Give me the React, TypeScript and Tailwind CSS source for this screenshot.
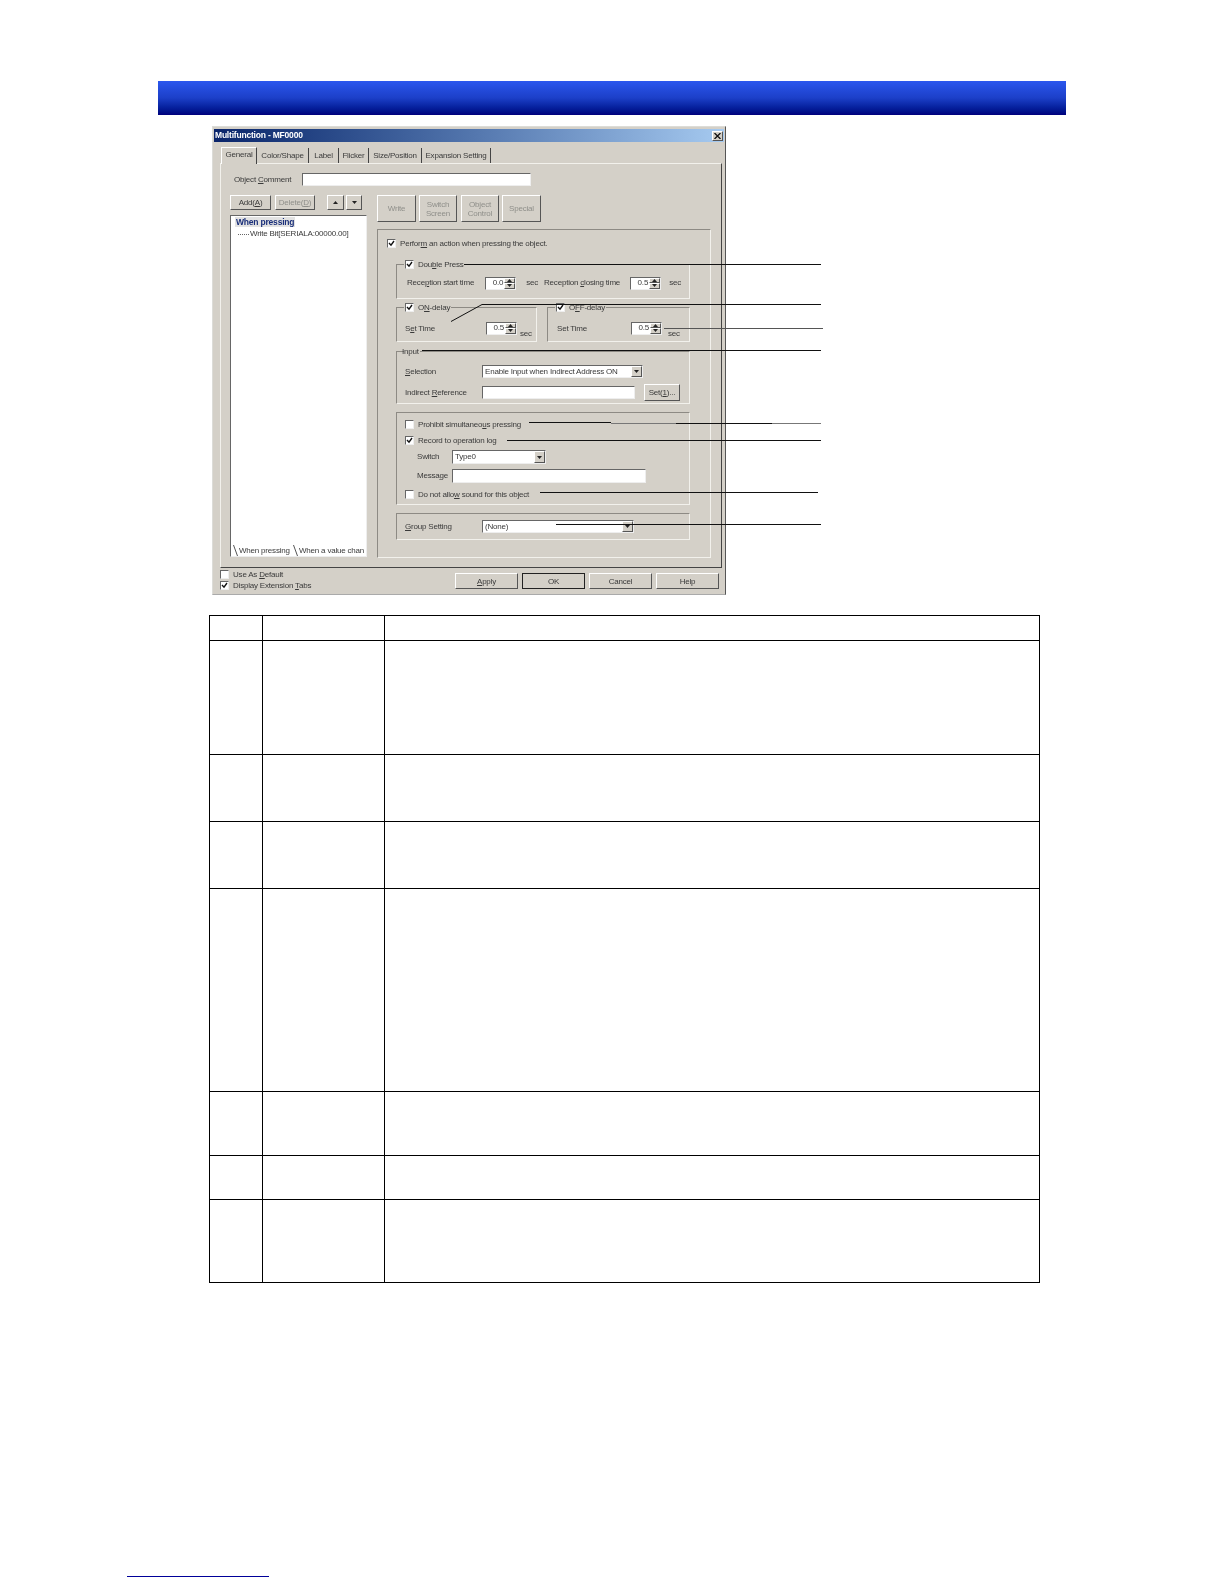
import type { ReactNode } from "react";

const raised = "bg-[#d4d0c8] border border-t-[#fff] border-l-[#fff] border-r-[#555] border-b-[#555]";
const sunken = "bg-white border border-t-[#666] border-l-[#666] border-r-[#eee] border-b-[#eee]";

const Check = ({ on = false }: { on?: boolean }) => (
  <span className={`${sunken} w-[9px] h-[9px] shrink-0 flex items-center justify-center`}>
    {on && (
      <svg width="7" height="7" viewBox="0 0 7 7">
        <path d="M1 3 L3 5.2 L6 1" fill="none" stroke="#111" strokeWidth="1.4" />
      </svg>
    )}
  </span>
);

const CheckRow = ({ on, children, className = "" }: { on?: boolean; children: ReactNode; className?: string }) => (
  <div className={`flex items-center gap-[4px] ${className}`}>
    <Check on={on} />
    <span>{children}</span>
  </div>
);

const Arrow = ({ up }: { up?: boolean }) => (
  <svg width="5" height="3" viewBox="0 0 5 3" className="block">
    <path d={up ? "M2.5 0 L5 3 L0 3 Z" : "M0 0 L5 0 L2.5 3 Z"} fill="#222" />
  </svg>
);

const Spin = ({ value }: { value: string }) => (
  <div className={`${sunken} w-[31px] h-[13px] flex items-center justify-between shrink-0`}>
    <span className="ml-auto mr-[1px]">{value}</span>
    <div className="w-[11px] h-full flex flex-col">
      <span className={`${raised} flex-1 flex items-center justify-center`}><Arrow up /></span>
      <span className={`${raised} flex-1 flex items-center justify-center`}><Arrow /></span>
    </div>
  </div>
);

const Select = ({ value, className }: { value: string; className: string }) => (
  <div className={`${sunken} ${className} h-[13px] flex items-center justify-between pl-[2px] shrink-0`}>
    <span>{value}</span>
    <span className={`${raised} w-[11px] h-full flex items-center justify-center`}><Arrow /></span>
  </div>
);

const Btn = ({ children, className, off }: { children: ReactNode; className: string; off?: boolean }) => (
  <div className={`${raised} ${className} flex items-center justify-center text-center leading-[9px] shrink-0 ${off ? "text-[#8f8f8a]" : ""}`}>
    {children}
  </div>
);

const Group = ({ legend, className, children }: { legend?: ReactNode; className: string; children: ReactNode }) => (
  <div className={`relative border border-t-[#8d8a84] border-l-[#8d8a84] border-r-[#f2f1ec] border-b-[#f2f1ec] ${className}`}>
    {legend && <div className="absolute -top-[6px] left-[7px] bg-[#d4d0c8] px-[1px] h-[11px] flex items-center">{legend}</div>}
    {children}
  </div>
);

const Tab = ({ label, width }: { label: string; width: string }) => (
  <div className={`${width} h-[15px] flex items-center justify-center border-r border-r-[#444] mt-[1px]`}>{label}</div>
);

const Slant = () => (
  <svg width="5" height="11" viewBox="0 0 5 11" className="shrink-0">
    <path d="M0.5 0 L4.5 11" stroke="#555" strokeWidth="1" />
  </svg>
);

const Dialog = () => (
  <div className="w-[514px] h-[469px] ml-[212px] mt-[11px] bg-[#d4d0c8] border border-t-[#dcdcd8] border-l-[#dcdcd8] border-r-[#555] border-b-[#aaa] pt-[2px] px-[1px] text-[8px] tracking-[-0.2px] text-[#3a3a3a] leading-none blur-[0.3px]">
    {/* barra de titulo */}
    <div className="h-[13px] bg-gradient-to-r from-[#0a246a] to-[#a6caf0] flex items-center justify-between pl-[1px] pr-[1px] text-white font-bold text-[8.5px]">
      <span>Multifunction - MF0000</span>
      <span className={`${raised} w-[11px] h-[10px] flex items-center justify-center`}>
        <svg width="7" height="6" viewBox="0 0 7 6">
          <path d="M0.5 0 L6.5 6 M6.5 0 L0.5 6" stroke="#111" strokeWidth="1.3" />
        </svg>
      </span>
    </div>

    {/* pestañas */}
    <div className="flex h-[18px] pl-[7px] items-end mt-[3px]">
      <div className="w-[36px] h-[17px] flex items-center justify-center pb-[3px] bg-[#d4d0c8] border border-b-0 border-t-[#fff] border-l-[#fff] border-r-[#444] -mb-[1px] relative z-10">General</div>
      <Tab label="Color/Shape" width="w-[52px]" />
      <Tab label="Label" width="w-[30px]" />
      <Tab label="Flicker" width="w-[30px]" />
      <Tab label="Size/Position" width="w-[53px]" />
      <Tab label="Expansion Setting" width="w-[69px]" />
    </div>

    <div className="ml-[6px] w-[502px] h-[405px] border border-t-[#f2f1ec] border-l-[#f2f1ec] border-r-[#444] border-b-[#444] pl-[9px] pt-[9px]">
      <div className="flex items-center h-[13px]">
        <span className="w-[72px] pl-[4px]">Object <u>C</u>omment</span>
        <div className={`${sunken} w-[229px] h-[13px]`} />
      </div>

      <div className="flex gap-[10px] mt-[9px]">
        {/* columna izquierda */}
        <div className="w-[137px]">
          <div className="flex h-[15px] items-stretch">
            <Btn className="w-[41px]">Add(<u>A</u>)</Btn>
            <Btn off className="w-[40px] ml-[4px]">Delete(<u>D</u>)</Btn>
            <Btn off className="w-[17px] ml-[12px]"><Arrow up /></Btn>
            <Btn off className="w-[16px] ml-[2px]"><Arrow /></Btn>
          </div>
          <div className={`${sunken} h-[342px] mt-[5px] flex flex-col`}>
            <span className="self-start ml-[4px] mt-[1px] px-[1px] bg-[#e2e2e2] font-bold text-[#1a2f7a] text-[8.5px] h-[10px] flex items-center">When pressing</span>
            <div className="flex items-center ml-[7px] mt-[2px] h-[10px]">
              <span className="w-[11px] border-t border-dotted border-[#666]" />
              <span className="ml-[1px] whitespace-nowrap">Write Bit[SERIALA:00000.00]</span>
            </div>
            <div className="mt-auto flex h-[11px] items-end whitespace-nowrap">
              <div className="ml-[2px] w-[60px] flex items-center gap-[1px]">
                <Slant />
                <span>When pressing</span>
              </div>
              <div className="flex-1 flex items-center gap-[1px] min-w-0">
                <Slant />
                <span>When a value chan</span>
              </div>
            </div>
          </div>
        </div>

        {/* columna derecha */}
        <div className="w-[334px]">
          <div className="flex gap-[3px] h-[27px] items-stretch">
            <Btn off className="w-[39px]">Write</Btn>
            <Btn off className="w-[38px]">Switch<br />Screen</Btn>
            <Btn off className="w-[38px] ml-[1px]">Object<br />Control</Btn>
            <Btn off className="w-[39px]">Special</Btn>
          </div>
          <div className="h-[329px] mt-[7px] border border-t-[#8d8a84] border-l-[#8d8a84] border-r-[#f2f1ec] border-b-[#f2f1ec] pl-[18px]">
            <CheckRow on className="-ml-[9px] mt-[9px] h-[9px]">Perfor<u>m</u> an action when pressing the object.</CheckRow>

            <Group
              className="w-[294px] h-[35px] mt-[16px] pl-[10px] pr-[8px] flex items-center pt-[3px]"
              legend={<CheckRow on>Dou<u>b</u>le Press</CheckRow>}
            >
              <span className="w-[79px]">Rece<u>p</u>tion start time</span>
              <Spin value="0.0" />
              <span className="ml-[10px] w-[18px]">sec</span>
              <span className="w-[87px]">Reception <u>c</u>losing time</span>
              <Spin value="0.5" />
              <span className="ml-[8px]">sec</span>
            </Group>

            <div className="flex gap-[10px] mt-[8px]">
              <Group
                className="w-[141px] h-[35px] pl-[8px] flex items-center pt-[7px]"
                legend={<CheckRow on>O<u>N</u>-delay</CheckRow>}
              >
                <span className="w-[81px] mt-[2px]">S<u>e</u>t Time</span>
                <Spin value="0.5" />
                <span className="ml-[3px] mt-[12px]">sec</span>
              </Group>
              <Group
                className="w-[143px] h-[35px] pl-[9px] flex items-center pt-[7px]"
                legend={<CheckRow on>O<u>F</u>F-delay</CheckRow>}
              >
                <span className="w-[74px] mt-[2px]">Set Time</span>
                <Spin value="0.5" />
                <span className="ml-[6px] mt-[12px]">sec</span>
              </Group>
            </div>

            <Group className="w-[294px] h-[53px] mt-[9px] pl-[8px] pt-[13px]" legend={<span className="-ml-[3px]">Input</span>}>
              <div className="flex items-center h-[13px]">
                <span className="w-[77px]"><u>S</u>election</span>
                <Select value="Enable Input when Indirect Address ON" className="w-[161px]" />
              </div>
              <div className="flex items-center h-[17px] mt-[6px]">
                <span className="w-[77px]">Indirect <u>R</u>eference</span>
                <div className={`${sunken} w-[153px] h-[13px]`} />
                <Btn className="w-[36px] h-[17px] ml-[9px]">Set(<u>1</u>)...</Btn>
              </div>
            </Group>

            <Group className="w-[294px] h-[93px] mt-[8px] pl-[8px] pt-[7px]">
              <CheckRow className="h-[9px]">Prohibit simultaneo<u>u</u>s pressing</CheckRow>
              <CheckRow on className="h-[9px] mt-[7px]">Record to operation lo<u>g</u></CheckRow>
              <div className="flex items-center h-[14px] mt-[5px] pl-[12px]">
                <span className="w-[35px]">Switch</span>
                <Select value="Type0" className="w-[94px] !h-[14px]" />
              </div>
              <div className="flex items-center h-[14px] mt-[5px] pl-[12px]">
                <span className="w-[35px]">Messa<u>g</u>e</span>
                <div className={`${sunken} w-[194px] h-[14px]`} />
              </div>
              <CheckRow className="h-[9px] mt-[7px]">Do not allo<u>w</u> sound for this object</CheckRow>
            </Group>

            <Group className="w-[294px] h-[27px] mt-[8px] pl-[8px] flex items-center">
              <span className="w-[77px]"><u>G</u>roup Setting</span>
              <Select value="(None)" className="w-[152px]" />
            </Group>
          </div>
        </div>
      </div>
    </div>

    {/* pie del dialogo */}
    <div className="flex justify-between pl-[6px] pr-[5px] pt-[5px]">
      <div className="flex flex-col gap-[2px] -mt-[3px]">
        <CheckRow className="h-[9px]">Use As <u>D</u>efault</CheckRow>
        <CheckRow on className="h-[9px]">Display Extension <u>T</u>abs</CheckRow>
      </div>
      <div className="flex gap-[4px] h-[16px]">
        <Btn className="w-[63px]"><u>A</u>pply</Btn>
        <Btn className="w-[63px] !border-r-[#222] !border-b-[#222] !border-t-[#222] !border-l-[#222]">OK</Btn>
        <Btn className="w-[63px]">Cancel</Btn>
        <Btn className="w-[63px]">Help</Btn>
      </div>
    </div>
  </div>
);

// lineas de llamada sobre el dialogo
const Callouts = () => (
  <svg className="absolute inset-0 w-full h-full pointer-events-none" viewBox="0 0 1224 1584">
    <g stroke="#111" strokeWidth="1" fill="none" shapeRendering="crispEdges">
      <path d="M464 264.5H821" />
      <path d="M482 304.5H821" />
      <path d="M422 350.5H821" />
      <path d="M507 440.5H821" />
      <path d="M540 492.5H818" />
      <path d="M556 524.5H821" />
      <path d="M529 422.5H611" />
      <path d="M676 423.5H772" />
      <path d="M664 328.5H823" stroke="#555" />
      <path d="M611 423.5H676M772 423.5H821" stroke="#777" />
    </g>
    <path d="M451 321.5L482 304.5" stroke="#111" strokeWidth="1" fill="none" />
  </svg>
);

const rows = ["h-[25px]", "h-[114px]", "h-[67px]", "h-[67px]", "h-[203px]", "h-[64px]", "h-[44px]", "h-[83px]"];

const App = () => {
  return (
    <div className="relative w-[1224px] h-[1584px] bg-white overflow-hidden pt-[81px] font-['Liberation_Sans',Arial,sans-serif]">
      <div className="ml-[158px] w-[908px] h-[34px] bg-gradient-to-b from-[#2b57ee] via-[#1c3fc8] to-[#00007c]" />
      <Dialog />

      <table className="ml-[209px] mt-[20px] w-[831px] table-fixed border-collapse">
        <colgroup>
          <col className="w-[53px]" />
          <col className="w-[122px]" />
          <col />
        </colgroup>
        <tbody>
          {rows.map((h, i) => (
            <tr key={i} className={h}>
              <td className="border border-black" />
              <td className="border border-black" />
              <td className="border border-black" />
            </tr>
          ))}
        </tbody>
      </table>

      <div className="ml-[127px] mt-[293px] w-[142px] h-[1px] bg-[#000099]" />
      <Callouts />
    </div>
  );
};

export default App;
